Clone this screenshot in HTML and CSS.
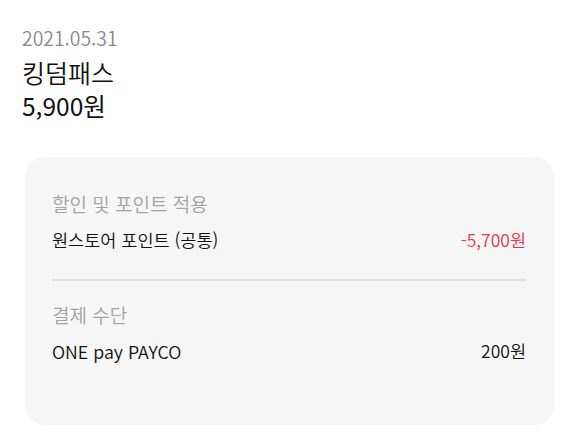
FILE: index.html
```html
<!DOCTYPE html>
<html lang="ko">

<head>
    <meta charset="UTF-8">
    <meta name="viewport" content="width=device-width, initial-scale=1.0">
    <title>결제 상세</title>
    <link rel="stylesheet" href="styles.css">
</head>

<body>
    <div class="container">
        <div class="summary">
            <div class="date">2021.05.31</div>
            <div class="product">킹덤패스</div>
            <div class="price">5,900원</div>
        </div>

        <div class="card">
            <div class="section">
                <div class="section-title">할인 및 포인트 적용</div>
                <div class="row">
                    <span>원스토어 포인트 (공통)</span>
                    <span class="discount">-5,700원</span>
                </div>
            </div>
            <div class="divider"></div>
            <div class="section">
                <div class="section-title">결제 수단</div>
                <div class="row">
                    <span class="latin">ONE pay PAYCO</span>
                    <span>200원</span>
                </div>
            </div>
        </div>
    </div>
</body>

</html>
```

FILE: styles.css
```css
*,
html,
body {
    margin: 0;
    padding: 0;
    box-sizing: border-box;
}

body {
    font-family: "Noto Sans CJK KR", "Noto Sans", sans-serif;
    font-weight: 350;
    color: #111111;
    background-color: white;
}

.container {
    padding: 24px 26px 0 25px;
}

.summary {
    margin-left: -3px;
}

.date {
    font-size: 19.4px;
    line-height: 28px;
    color: #8a8a8a;
}

.product {
    font-size: 25px;
    line-height: 32px;
    margin-top: 4px;
}

.price {
    font-size: 24.5px;
    line-height: 32px;
    font-weight: 400;
    margin-top: 2px;
}

.card {
    margin-top: 35px;
    width: 529px;
    height: 268px;
    background-color: #f6f6f6;
    border-radius: 20px;
    padding: 34px 28px 0 27px;
}

.section-title {
    font-size: 19px;
    line-height: 26px;
    color: #a3a3a3;
}

.row {
    display: flex;
    justify-content: space-between;
    align-items: center;
    font-size: 17.5px;
    line-height: 24px;
    margin-top: 11px;
}

.latin {
    font-size: 17.8px;
}

.discount {
    color: #e8344e;
}

.divider {
    height: 2px;
    background-color: #e2e2e2;
    margin: 27px 0 21px;
}
```
